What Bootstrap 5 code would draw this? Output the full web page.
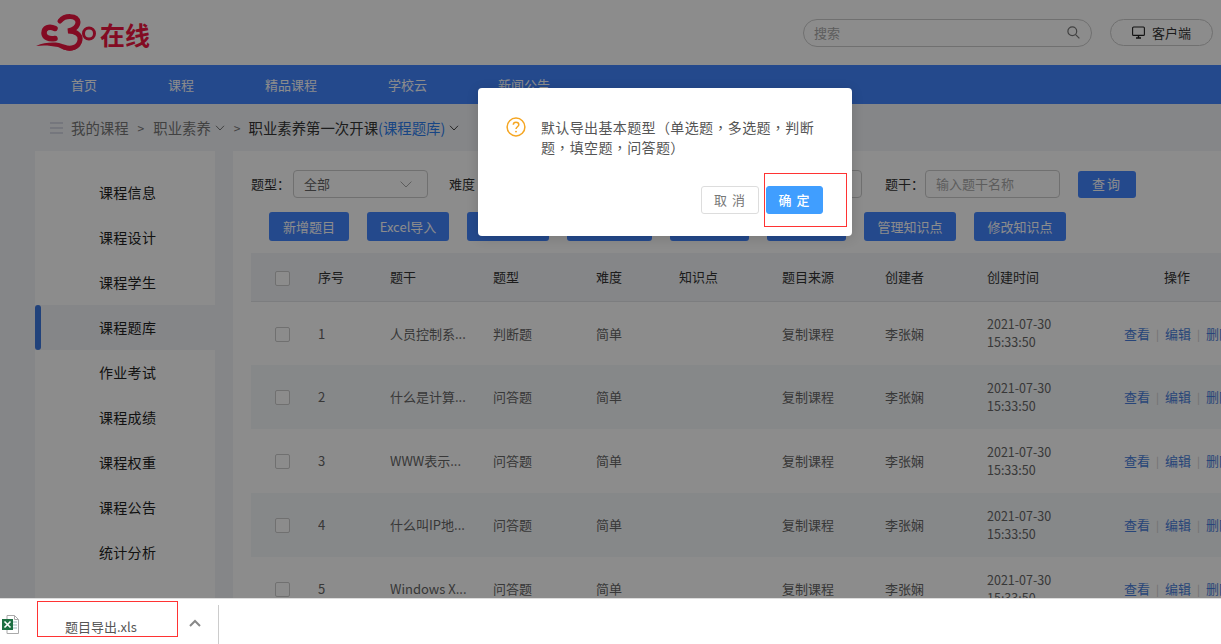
<!DOCTYPE html>
<html lang="zh-CN">
<head>
<meta charset="utf-8">
<title>题库</title>
<link href="https://cdn.jsdelivr.net/npm/bootstrap@5.3.0/dist/css/bootstrap.min.css" rel="stylesheet">
<style>
html,body{height:100%;overflow:hidden}
body{font-family:"Noto Sans CJK SC","Liberation Sans",sans-serif;font-size:13px;color:#333;background:#fff}
.stage{height:598px;background:#f2f4f8}
.topbar{height:65px;background:#fff;padding:0 8px 0 36px}
.brand-word{font-size:25px;font-weight:700;fill:#ee1540;font-family:"Noto Sans CJK SC",sans-serif}
.search-pill{width:289px;height:28px;border:1px solid #ccc;border-radius:14px;padding:0 11px 0 10px;color:#aaa;margin-left:auto}
.client-pill{width:103px;height:27px;border:1px solid #ccc;border-radius:14px;margin-left:18px;gap:7px;color:#333}
.mainnav{height:39px;background:#4385ff;padding-left:71px;gap:71px;color:#fff}
.crumbs{height:47px;padding-left:50px;font-size:14.4px;color:#777}
.crumbs .sep{margin:0 9px;font-size:12px}
.crumbs .sep.wide{margin:0 8px 0 9px}
.crumbs .now{color:#333}
.crumbs .hl{color:#2d7ff0}
.bodywrap{height:447px;padding-left:35px;gap:18px}
.sidemenu{width:180px;background:#fff;padding-top:19px;flex:none;font-size:14px}
.sidemenu .entry{height:45px;padding-left:64px;color:#222;letter-spacing:.3px;position:relative}
.sidemenu .entry.on{background:#f2f4f8}
.sidemenu .entry.on::before{content:"";position:absolute;left:0;top:0;bottom:0;width:6px;background:#3d78e0;border-radius:3px}
.panel{flex:1;background:#fff;overflow:hidden;padding:19px 0 0 18px;min-width:0}
.filters{height:28px}
.flabel{color:#333;white-space:nowrap;margin-right:3px}
.flabel.gap-a{margin-left:21px}
.flabel.gap-b{margin-left:23px;margin-right:1px}
.filter-space{width:98px;flex:none}
.fsel{width:135px;height:28px;border:1px solid #ccc;border-radius:4px;padding:0 15px 0 10px;color:#666;flex:none}
.fsel.ph{color:#aaa}
.qbtn,.tbtn{background:#4385ff;border:0;color:#fff;border-radius:3px;padding:0;font-size:13px}
.qbtn{width:58px;height:27px;letter-spacing:2px;margin-left:18px}
.tools{padding-left:18px;gap:18px;margin-top:14px}
.tbtn{height:29px;width:80px}
.tools .tbtn:nth-child(2),.tools .tbtn:nth-child(3){width:82px}
.tools .tbtn:nth-child(4){width:85px}
.tools .tbtn:nth-child(5){width:79px}
.tools .tbtn:nth-child(6){width:79px}
.tools .tbtn:nth-child(7),.tools .tbtn:nth-child(8){width:92px}
.qtable{table-layout:fixed;width:1000px;margin:12px 0 0;--bs-table-bg:transparent;color:#666}
.qtable th,.qtable td{padding:0;vertical-align:middle;font-weight:400;border:0;white-space:nowrap;overflow:hidden}
.qtable thead tr{height:48px;background:#f2f4f8;border-bottom:1px solid #e2e4e8}
.qtable thead th{color:#333}
.qtable thead th.ophead{padding-left:40px}
.qtable tbody tr{height:64px}
.qtable tbody tr:nth-child(even){background:#f5f7fa}
.qtable .form-check-input{width:15px;height:15px;margin:3px 0 0 24px;border-radius:2px;border:1px solid #ccc;float:none}
.qtable thead .form-check-input{margin-top:4px}
.when{line-height:18px;font-size:12.5px}
.acts{color:#4a7fdc}
.acts i{font-style:normal;color:#ccc;margin:0 6px;font-size:11px}
.dim{position:absolute;inset:0;background:rgba(0,0,0,.45)}
.dialog-box{position:absolute;left:478px;top:88px;width:374px;height:148px;background:#fff;border-radius:4px;box-shadow:0 2px 12px rgba(0,0,0,.15)}
.dialog-msg{padding:29px 24px 0 28px;gap:15px}
.dialog-msg p{margin:0;font-family:"Noto Sans CJK TC","Noto Sans CJK SC",sans-serif;font-size:14px;line-height:20px;letter-spacing:.37px;color:#555}
.dialog-foot{position:absolute;left:223px;top:98px;gap:7px}
.dlg-btn{width:58px;height:28px;border-radius:3px;font-size:13px;letter-spacing:1px;padding:0;border:1px solid #ddd;background:#fff;color:#777}
.dlg-btn.ok{width:57px;background:#409eff;border-color:#409eff;color:#fff;font-weight:500}
.redmark{position:absolute;border:1px solid #f33;pointer-events:none}
.rm-ok{left:764px;top:173px;width:83px;height:54px}
.rm-file{left:37px;top:601px;width:141px;height:36px}
.dlbar{height:46px;background:#fff;border-top:1px solid #ddd;padding-left:2px;color:#555}
.dl-name{margin-left:46px;width:118px;padding-top:18px;font-size:13px;white-space:nowrap}
.dl-up{width:24px;padding-top:20px}
.dl-div{width:1px;height:39px;background:#ccc;margin:6px 0 0 11px}
</style>
</head>
<body class="position-relative">
<div class="stage position-relative overflow-hidden">
  <header class="topbar d-flex align-items-center">
    <svg width="118" height="40" viewBox="36 12 118 40" role="img" aria-label="30在线">
      <g fill="none" stroke="#ee1540" stroke-linecap="round">
        <path d="M55 27.5C49 24.5 44 27 44 32C44 36.5 49 38.5 55 37.5" stroke-width="5.5"/>
        <path d="M60 20C65 14 77 14 78 21C78 26 73 29 68 30C76 30 81 34 80 39C79 46 71 49 64 46" stroke-width="5"/>
        <circle cx="89" cy="32.5" r="5.5" stroke-width="3"/>
      </g>
      <path d="M36 45C44 41.5 52 41 59 42C65 43 70 50 80 45C72 53 64 49 58 46C50 44.5 44 44 36 45Z" fill="#ee1540"/>
      <text x="100" y="44" class="brand-word">在线</text>
    </svg>
    <div class="search-pill d-flex align-items-center justify-content-between">
      <span>搜索</span>
      <svg width="13" height="13" viewBox="0 0 13 13" fill="none" stroke="#777" stroke-width="1.2"><circle cx="5.3" cy="5.3" r="4.4"/><path d="M8.6 8.6L12.4 12.4"/></svg>
    </div>
    <div class="client-pill d-flex align-items-center justify-content-center">
      <svg width="13" height="13" viewBox="0 0 13 13" fill="none" stroke="#222" stroke-width="1.1"><rect x=".6" y="1" width="11.8" height="8.4" rx="1"/><path d="M4 12h5M6.5 9.5V12" stroke-width="1.4"/></svg>
      <span>客户端</span>
    </div>
  </header>
  <nav class="mainnav d-flex align-items-center">
    <span>首页</span><span>课程</span><span>精品课程</span><span>学校云</span><span>新闻公告</span>
  </nav>
  <div class="crumbs d-flex align-items-center">
    <svg width="13" height="12" viewBox="0 0 13 12" stroke="#b9bdd0" class="me-2"><path d="M0 1h13M0 6h13M0 11h13"/></svg>
    <span>我的课程</span><span class="sep">&gt;</span>
    <span>职业素养</span>
    <svg width="10" height="6" viewBox="0 0 10 6" fill="none" stroke="#777" class="ms-1"><path d="M1 .8L5 5L9 .8"/></svg>
    <span class="sep wide">&gt;</span>
    <span class="now">职业素养第一次开课<span class="hl">(课程题库)</span></span>
    <svg width="10" height="6" viewBox="0 0 10 6" fill="none" stroke="#444" class="ms-1"><path d="M1 .8L5 5L9 .8"/></svg>
  </div>
  <div class="bodywrap d-flex">
    <aside class="sidemenu">
      <div class="entry d-flex align-items-center">课程信息</div>
      <div class="entry d-flex align-items-center">课程设计</div>
      <div class="entry d-flex align-items-center">课程学生</div>
      <div class="entry on d-flex align-items-center">课程题库</div>
      <div class="entry d-flex align-items-center">作业考试</div>
      <div class="entry d-flex align-items-center">课程成绩</div>
      <div class="entry d-flex align-items-center">课程权重</div>
      <div class="entry d-flex align-items-center">课程公告</div>
      <div class="entry d-flex align-items-center">统计分析</div>
    </aside>
    <main class="panel">
      <div class="filters d-flex align-items-center">
        <span class="flabel">题型：</span>
        <div class="fsel d-flex align-items-center justify-content-between"><span>全部</span><svg width="12" height="7" viewBox="0 0 12 7" fill="none" stroke="#aaa"><path d="M.6.6L6 6L11.4.6"/></svg></div>
        <span class="flabel gap-a">难度</span>
        <div class="fsel ms-3"></div>
        <div class="filter-space"></div>
        <div class="fsel"></div>
        <span class="flabel gap-b">题干：</span>
        <div class="fsel ph d-flex align-items-center"><span>输入题干名称</span></div>
        <button class="qbtn" type="button">查询</button>
      </div>
      <div class="tools d-flex">
        <button class="tbtn" type="button">新增题目</button>
        <button class="tbtn" type="button">Excel导入</button>
        <button class="tbtn" type="button"></button>
        <button class="tbtn" type="button"></button>
        <button class="tbtn" type="button"></button>
        <button class="tbtn" type="button"></button>
        <button class="tbtn" type="button">管理知识点</button>
        <button class="tbtn" type="button">修改知识点</button>
      </div>
      <table class="table qtable">
        <colgroup><col width="67"><col width="72"><col width="103"><col width="103"><col width="83"><col width="103"><col width="103"><col width="102"><col width="137"><col width="127"></colgroup>
        <thead><tr><th><input class="form-check-input" type="checkbox" aria-label="全选"></th><th>序号</th><th>题干</th><th>题型</th><th>难度</th><th>知识点</th><th>题目来源</th><th>创建者</th><th>创建时间</th><th class="ophead">操作</th></tr></thead>
        <tbody>
          <tr><td><input class="form-check-input" type="checkbox" aria-label="选择"></td><td>1</td><td>人员控制系...</td><td>判断题</td><td>简单</td><td></td><td>复制课程</td><td>李张娴</td><td class="when">2021-07-30<br>15:33:50</td><td class="acts">查看<i>|</i>编辑<i>|</i>删除</td></tr>
          <tr><td><input class="form-check-input" type="checkbox" aria-label="选择"></td><td>2</td><td>什么是计算...</td><td>问答题</td><td>简单</td><td></td><td>复制课程</td><td>李张娴</td><td class="when">2021-07-30<br>15:33:50</td><td class="acts">查看<i>|</i>编辑<i>|</i>删除</td></tr>
          <tr><td><input class="form-check-input" type="checkbox" aria-label="选择"></td><td>3</td><td>WWW表示...</td><td>问答题</td><td>简单</td><td></td><td>复制课程</td><td>李张娴</td><td class="when">2021-07-30<br>15:33:50</td><td class="acts">查看<i>|</i>编辑<i>|</i>删除</td></tr>
          <tr><td><input class="form-check-input" type="checkbox" aria-label="选择"></td><td>4</td><td>什么叫IP地...</td><td>问答题</td><td>简单</td><td></td><td>复制课程</td><td>李张娴</td><td class="when">2021-07-30<br>15:33:50</td><td class="acts">查看<i>|</i>编辑<i>|</i>删除</td></tr>
          <tr><td><input class="form-check-input" type="checkbox" aria-label="选择"></td><td>5</td><td>Windows X...</td><td>问答题</td><td>简单</td><td></td><td>复制课程</td><td>李张娴</td><td class="when">2021-07-30<br>15:33:50</td><td class="acts">查看<i>|</i>编辑<i>|</i>删除</td></tr>
        </tbody>
      </table>
    </main>
  </div>
  <div class="dim"></div>
  <div class="dialog-box" role="dialog">
    <div class="dialog-msg d-flex">
      <svg width="20" height="20" viewBox="0 0 20 20" fill="none" class="flex-shrink-0"><circle cx="10" cy="10" r="8.9" stroke="#f5a623" stroke-width="1.5"/><path d="M7.3 7.8C7.3 6.2 8.5 5.2 10 5.2C11.6 5.2 12.8 6.2 12.8 7.7C12.8 9.6 10 9.9 10 12" stroke="#f5a623" stroke-width="1.5"/><circle cx="10" cy="14.6" r=".95" fill="#f5a623"/></svg>
      <p lang="zh-Hant">默认导出基本题型（单选题，多选题，判断题，填空题，问答题）</p>
    </div>
    <div class="dialog-foot d-flex">
      <button class="dlg-btn" type="button">取 消</button>
      <button class="dlg-btn ok" type="button">确 定</button>
    </div>
  </div>
  <div class="redmark rm-ok"></div>
</div>
<footer class="dlbar d-flex">
  <svg width="17" height="19" viewBox="0 0 17 19" class="mt-3 flex-shrink-0" fill="none"><path d="M5 .5h7.5l4 4v14H5z" fill="#fff" stroke="#aaa"/><path d="M12.5.5v4h4" stroke="#aaa"/><path d="M11 7h4M11 10h4M11 13h4" stroke="#9bb"/><rect y="4" width="11" height="11" fill="#1d6f42"/><path d="M2.5 6.5L8.5 12.5M8.5 6.5L2.5 12.5" stroke="#fff" stroke-width="1.6"/></svg>
  <div class="dl-name">题目导出.xls</div>
  <div class="dl-up d-flex justify-content-center"><svg width="12" height="8" viewBox="0 0 12 8" fill="none" stroke="#888" stroke-width="2"><path d="M1 7L6 2L11 7"/></svg></div>
  <div class="dl-div"></div>
</footer>
<div class="redmark rm-file"></div>
<script src="https://cdn.jsdelivr.net/npm/bootstrap@5.3.0/dist/js/bootstrap.bundle.min.js"></script>
</body>
</html>
